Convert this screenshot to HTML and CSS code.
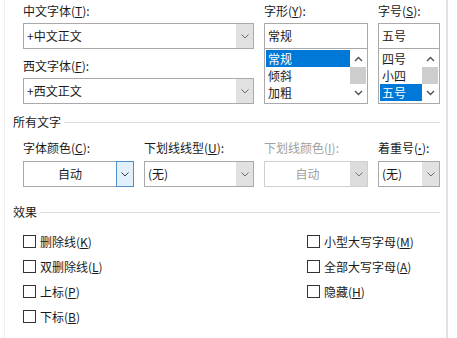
FILE: index.html
```html
<!DOCTYPE html>
<html lang="zh-CN">
<head>
  <meta charset="UTF-8" />
  <title>字体</title>
  <link rel="stylesheet" href="styles.css">
</head>
<body>
  <div class="dialog">
    <div class="font-grid">
      <div class="col">
        <div class="lbl">中文字体(<u>T</u>):</div>
        <div class="combo">
          <span class="combo-text">+中文正文</span>
          <span class="drop"><svg width="8" height="5" viewBox="0 0 8 5"><polyline points="0.5,0.5 4,4 7.5,0.5" fill="none" stroke="#6a6a6a" stroke-width="1"/></svg></span>
        </div>
        <div class="lbl lbl-next">西文字体(<u>F</u>):</div>
        <div class="combo">
          <span class="combo-text">+西文正文</span>
          <span class="drop"><svg width="8" height="5" viewBox="0 0 8 5"><polyline points="0.5,0.5 4,4 7.5,0.5" fill="none" stroke="#6a6a6a" stroke-width="1"/></svg></span>
        </div>
      </div>

      <div class="col">
        <div class="lbl">字形(<u>Y</u>):</div>
        <div class="field">常规</div>
        <div class="listbox">
          <ul class="items">
            <li class="sel">常规</li>
            <li>倾斜</li>
            <li>加粗</li>
          </ul>
          <div class="scroll">
            <span class="arrow"><svg width="9" height="6" viewBox="0 0 9 6"><polyline points="1,5 4.5,1.5 8,5" fill="none" stroke="#505050" stroke-width="1.4"/></svg></span>
            <span class="thumb"></span>
            <span class="arrow"><svg width="9" height="6" viewBox="0 0 9 6"><polyline points="1,1 4.5,4.5 8,1" fill="none" stroke="#505050" stroke-width="1.4"/></svg></span>
          </div>
        </div>
      </div>

      <div class="col">
        <div class="lbl">字号(<u>S</u>):</div>
        <div class="field">五号</div>
        <div class="listbox">
          <ul class="items">
            <li>四号</li>
            <li>小四</li>
            <li class="sel">五号</li>
          </ul>
          <div class="scroll">
            <span class="arrow"><svg width="9" height="6" viewBox="0 0 9 6"><polyline points="1,5 4.5,1.5 8,5" fill="none" stroke="#505050" stroke-width="1.4"/></svg></span>
            <span class="thumb"></span>
            <span class="arrow"><svg width="9" height="6" viewBox="0 0 9 6"><polyline points="1,1 4.5,4.5 8,1" fill="none" stroke="#505050" stroke-width="1.4"/></svg></span>
          </div>
        </div>
      </div>
    </div>

    <div class="group-title">所有文字</div>
    <div class="text-grid">
      <div class="col">
        <div class="lbl lbl-row">字体颜色(<u>C</u>):</div>
        <div class="combo">
          <span class="combo-text center">自动</span>
          <span class="drop drop-focus"><svg width="8" height="5" viewBox="0 0 8 5"><polyline points="0.5,0.5 4,4 7.5,0.5" fill="none" stroke="#404040" stroke-width="1"/></svg></span>
        </div>
      </div>
      <div class="col">
        <div class="lbl lbl-row">下划线线型(<u>U</u>):</div>
        <div class="combo">
          <span class="combo-text">(无)</span>
          <span class="drop"><svg width="8" height="5" viewBox="0 0 8 5"><polyline points="0.5,0.5 4,4 7.5,0.5" fill="none" stroke="#6a6a6a" stroke-width="1"/></svg></span>
        </div>
      </div>
      <div class="col">
        <div class="lbl lbl-row disabled">下划线颜色(<u>I</u>):</div>
        <div class="combo combo-off">
          <span class="combo-text center">自动</span>
          <span class="drop"><svg width="8" height="5" viewBox="0 0 8 5"><polyline points="0.5,0.5 4,4 7.5,0.5" fill="none" stroke="#7a7a7a" stroke-width="1"/></svg></span>
        </div>
      </div>
      <div class="col">
        <div class="lbl lbl-row">着重号(<u class="dot">·</u>):</div>
        <div class="combo">
          <span class="combo-text">(无)</span>
          <span class="drop"><svg width="8" height="5" viewBox="0 0 8 5"><polyline points="0.5,0.5 4,4 7.5,0.5" fill="none" stroke="#6a6a6a" stroke-width="1"/></svg></span>
        </div>
      </div>
    </div>

    <div class="group-title group-effects">效果</div>
    <div class="effects">
      <div class="check"><span class="box"></span>删除线(<u>K</u>)</div>
      <div class="check"><span class="box"></span>小型大写字母(<u>M</u>)</div>
      <div class="check"><span class="box"></span>双删除线(<u>L</u>)</div>
      <div class="check"><span class="box"></span>全部大写字母(<u>A</u>)</div>
      <div class="check"><span class="box"></span>上标(<u>P</u>)</div>
      <div class="check"><span class="box"></span>隐藏(<u>H</u>)</div>
      <div class="check"><span class="box"></span>下标(<u>B</u>)</div>
    </div>
  </div>
</body>
</html>
```

FILE: styles.css
```css
body {
  margin: 0;
  background-color: white;
  color: #1a1a1a;
  font-family: "Noto Sans CJK SC", "Noto Sans", sans-serif;
  font-size: 12px;
}

.dialog {
  width: 444px;
  height: 338px;
  margin-left: 4px;
  padding: 3px 6px 0 8px;
  border-left: 1px solid #f0f0f0;
  border-right: 2px solid #e2e2e2;
  box-sizing: border-box;
  overflow: hidden;
}

u {
  text-underline-offset: 1px;
}

u.dot {
  font-family: "Liberation Sans", sans-serif;
  font-weight: bold;
}

.font-grid {
  display: grid;
  grid-template-columns: 231px 104px 62px;
  column-gap: 10px;
  padding-left: 10px;
}

.text-grid {
  display: grid;
  grid-template-columns: 111px 110px 104px 62px;
  column-gap: 10px;
  padding-left: 10px;
}

.lbl {
  line-height: 16px;
  height: 16px;
  margin-bottom: 4px;
  white-space: nowrap;
}

.lbl-next {
  margin-top: 9px;
}

.lbl-row {
  margin-top: 10px;
  margin-bottom: 5px;
}

.disabled {
  color: #a0a0a0;
}

.combo {
  display: flex;
  height: 26px;
  border: 1px solid #a9a9a9;
  box-sizing: border-box;
  background-color: white;
}

.combo-text {
  flex: 1;
  padding-left: 3px;
  line-height: 24px;
  white-space: nowrap;
}

.combo-text.center {
  text-align: center;
  padding-left: 0;
}

.drop {
  width: 17px;
  background-color: #e1e1e1;
  display: flex;
  align-items: center;
  justify-content: center;
}

.drop-focus {
  width: 16px;
  margin: -1px -1px -1px 0;
  background-color: #e2f0fb;
  border: 1px solid #4f8fc9;
}

.combo-off {
  border-color: #cfcfcf;
  color: #a0a0a0;
}

.combo-off .drop {
  background-color: #dcdcdc;
}

.field {
  height: 26px;
  border: 1px solid #a9a9a9;
  box-sizing: border-box;
  padding-left: 3px;
  line-height: 24px;
}

.listbox {
  display: flex;
  height: 55px;
  border: 1px solid #a9a9a9;
  border-top: none;
  padding: 1px;
  box-sizing: border-box;
}

.items {
  flex: 1;
  list-style: none;
  margin: 0;
  padding: 0;
}

.items li {
  height: 17px;
  line-height: 17px;
  padding-left: 2px;
}

.items .sel {
  background-color: #0078d7;
  color: white;
}

.scroll {
  width: 16px;
  display: flex;
  flex-direction: column;
}

.arrow {
  height: 17px;
  display: flex;
  align-items: center;
  justify-content: center;
}

.thumb {
  height: 17px;
  background-color: #cdcdcd;
}

.group-title {
  display: flex;
  align-items: center;
  line-height: 16px;
  margin-top: 10px;
}

.group-title::after {
  content: "";
  flex: 1;
  height: 1px;
  background-color: #dcdcdc;
  margin-left: 3px;
}

.group-effects {
  margin-top: 17px;
}

.effects {
  display: grid;
  grid-template-columns: 284px auto;
  grid-auto-rows: 25px;
  padding-left: 10px;
  margin-top: 9px;
}

.check {
  display: flex;
  align-items: center;
  white-space: nowrap;
}

.box {
  width: 13px;
  height: 13px;
  border: 1px solid #333;
  box-sizing: border-box;
  margin-right: 4px;
}
```
